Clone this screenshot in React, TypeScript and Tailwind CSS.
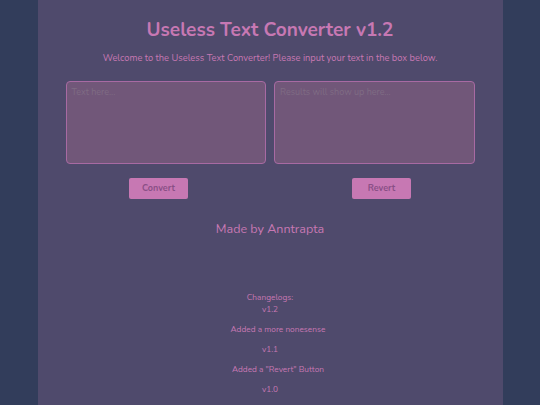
export default function App() {
  const font = { fontFamily: '"Nunito", "Lato", "Noto Sans", sans-serif' };
  return (
    <div className="min-h-[405px] w-full bg-[#323d5b] flex justify-center" style={font}>
      <div className="w-[465px] min-h-[405px] bg-[#4f4a6c] flex flex-col items-center px-[28px] pt-[18px] text-[#c778b3]">
        <h1 className="text-[19px] font-bold leading-[24px]">Useless Text Converter v1.2</h1>
        <p className="mt-[10px] text-[9.3px] leading-[12px]">
          Welcome to the Useless Text Converter! Please input your text in the box below.
        </p>
        <div className="mt-[17px] w-full flex gap-[8px]">
          <textarea
            placeholder="Text here..."
            className="flex-1 h-[83px] rounded-[4px] border border-[#a86aa3] bg-[#715779] px-[5px] py-[4px] text-[9px] leading-[12px] resize-none outline-none placeholder:text-[#7f6c84]"
          />
          <textarea
            placeholder="Results will show up here..."
            className="flex-1 h-[83px] rounded-[4px] border border-[#a86aa3] bg-[#715779] px-[5px] py-[4px] text-[9px] leading-[12px] resize-none outline-none placeholder:text-[#7f6c84]"
          />
        </div>
        <div className="mt-[14px] flex gap-[164px]">
          <button className="w-[59px] h-[21px] rounded-[2px] bg-[#c778b3] text-[#8a4f86] text-[9px] font-bold">
            Convert
          </button>
          <button className="w-[59px] h-[21px] rounded-[2px] bg-[#c778b3] text-[#8a4f86] text-[9px] font-bold">
            Revert
          </button>
        </div>
        <p className="mt-[21px] text-[12.5px] leading-[17px]">Made by Anntrapta</p>
        <div className="mt-[55px] flex flex-col items-center text-[8.3px] leading-[12px]">
          <p>Changelogs:</p>
          <p>v1.2</p>
          <p className="mt-[8px] ml-[16px]">Added a more nonesense</p>
          <p className="mt-[8px]">v1.1</p>
          <p className="mt-[8px] ml-[16px]">Added a "Revert" Button</p>
          <p className="mt-[8px]">v1.0</p>
        </div>
      </div>
    </div>
  );
}
